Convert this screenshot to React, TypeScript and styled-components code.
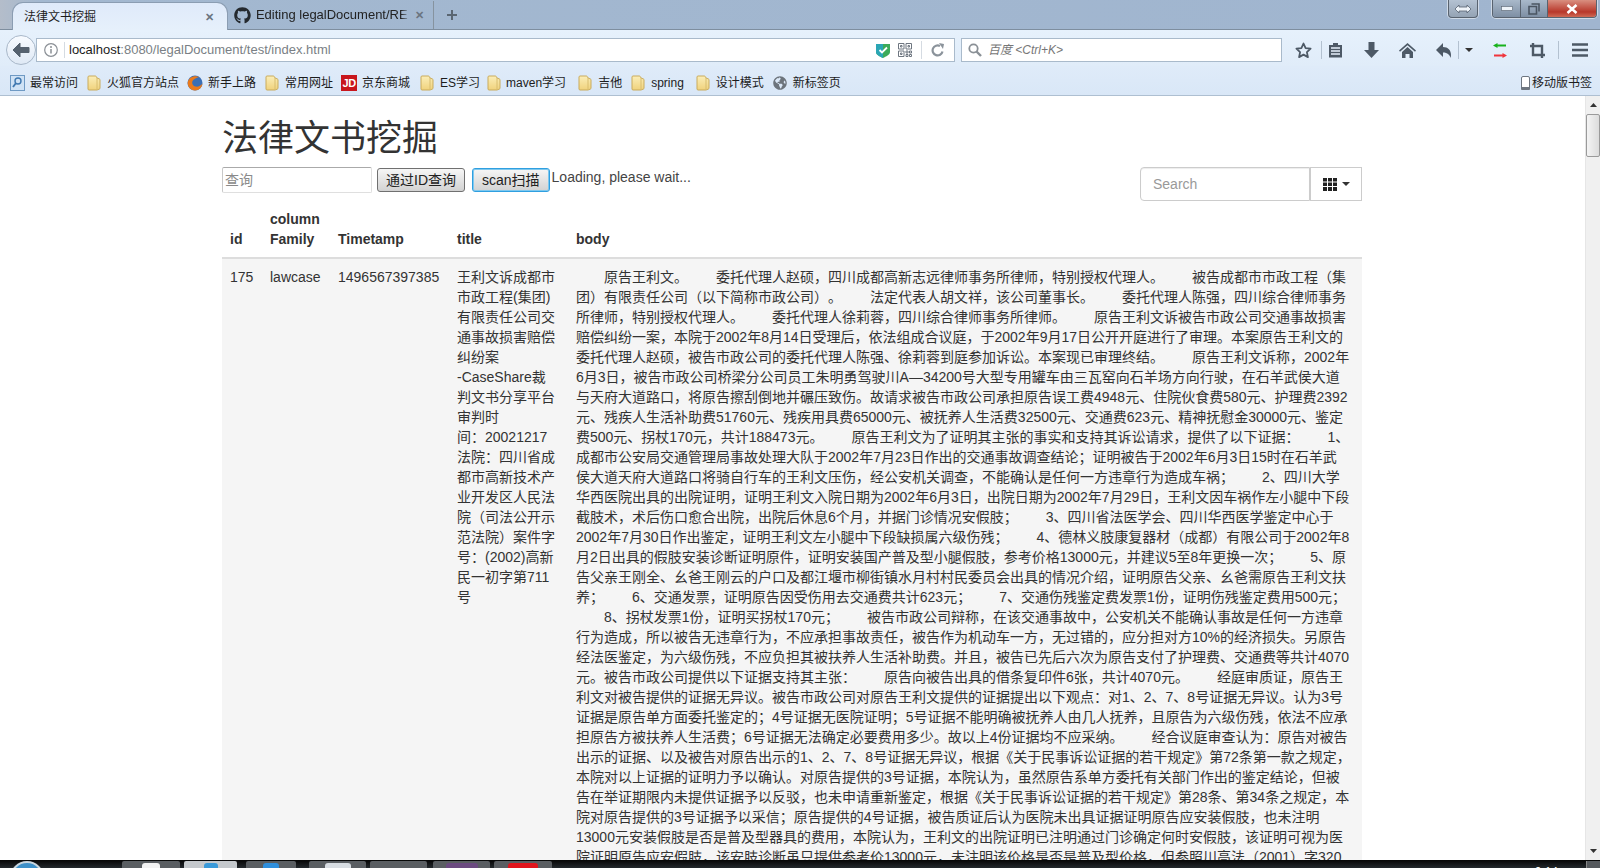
import React from 'react';
import styled, { createGlobalStyle } from 'styled-components';
import { FaGithub, FaGlobeAmericas } from 'react-icons/fa';

const bodyLines = [
  '　　原告王利文。　　委托代理人赵硕，四川成都高新志远律师事务所律师，特别授权代理人。　　被告成都市市政工程（集',
  '团）有限责任公司（以下简称市政公司）。　　法定代表人胡文祥，该公司董事长。　　委托代理人陈强，四川综合律师事务',
  '所律师，特别授权代理人。　　委托代理人徐莉蓉，四川综合律师事务所律师。　　原告王利文诉被告市政公司交通事故损害',
  '赔偿纠纷一案，本院于2002年8月14日受理后，依法组成合议庭，于2002年9月17日公开开庭进行了审理。本案原告王利文的',
  '委托代理人赵硕，被告市政公司的委托代理人陈强、徐莉蓉到庭参加诉讼。本案现已审理终结。　　原告王利文诉称，2002年',
  '6月3日，被告市政公司桥梁分公司员工朱明勇驾驶川A—34200号大型专用罐车由三瓦窑向石羊场方向行驶，在石羊武侯大道',
  '与天府大道路口，将原告擦刮倒地并碾压致伤。故请求被告市政公司承担原告误工费4948元、住院伙食费580元、护理费2392',
  '元、残疾人生活补助费51760元、残疾用具费65000元、被抚养人生活费32500元、交通费623元、精神抚慰金30000元、鉴定',
  '费500元、拐杖170元，共计188473元。　　原告王利文为了证明其主张的事实和支持其诉讼请求，提供了以下证据：　　1、',
  '成都市公安局交通管理局事故处理大队于2002年7月23日作出的交通事故调查结论；证明被告于2002年6月3日15时在石羊武',
  '侯大道天府大道路口将骑自行车的王利文压伤，经公安机关调查，不能确认是任何一方违章行为造成车祸；　　2、四川大学',
  '华西医院出具的出院证明，证明王利文入院日期为2002年6月3日，出院日期为2002年7月29日，王利文因车祸作左小腿中下段',
  '截肢术，术后伤口愈合出院，出院后休息6个月，并据门诊情况安假肢；　　3、四川省法医学会、四川华西医学鉴定中心于',
  '2002年7月30日作出鉴定，证明王利文左小腿中下段缺损属六级伤残；　　4、德林义肢康复器材（成都）有限公司于2002年8',
  '月2日出具的假肢安装诊断证明原件，证明安装国产普及型小腿假肢，参考价格13000元，并建议5至8年更换一次；　　5、原',
  '告父亲王刚全、幺爸王刚云的户口及都江堰市柳街镇水月村村民委员会出具的情况介绍，证明原告父亲、幺爸需原告王利文扶',
  '养；　　6、交通发票，证明原告因受伤用去交通费共计623元；　　7、交通伤残鉴定费发票1份，证明伤残鉴定费用500元；',
  '　　8、拐杖发票1份，证明买拐杖170元；　　被告市政公司辩称，在该交通事故中，公安机关不能确认事故是任何一方违章',
  '行为造成，所以被告无违章行为，不应承担事故责任，被告作为机动车一方，无过错的，应分担对方10%的经济损失。另原告',
  '经法医鉴定，为六级伤残，不应负担其被扶养人生活补助费。并且，被告已先后六次为原告支付了护理费、交通费等共计4070',
  '元。被告市政公司提供以下证据支持其主张：　　原告向被告出具的借条复印件6张，共计4070元。　　经庭审质证，原告王',
  '利文对被告提供的证据无异议。被告市政公司对原告王利文提供的证据提出以下观点：对1、2、7、8号证据无异议。认为3号',
  '证据是原告单方面委托鉴定的；4号证据无医院证明；5号证据不能明确被抚养人由几人抚养，且原告为六级伤残，依法不应承',
  '担原告方被扶养人生活费；6号证据无法确定必要费用多少。故以上4份证据均不应采纳。　　经合议庭审查认为：原告对被告',
  '出示的证据、以及被告对原告出示的1、2、7、8号证据无异议，根据《关于民事诉讼证据的若干规定》第72条第一款之规定，',
  '本院对以上证据的证明力予以确认。对原告提供的3号证据，本院认为，虽然原告系单方委托有关部门作出的鉴定结论，但被',
  '告在举证期限内未提供证据予以反驳，也未申请重新鉴定，根据《关于民事诉讼证据的若干规定》第28条、第34条之规定，本',
  '院对原告提供的3号证据予以采信；原告提供的4号证据，被告质证后认为医院未出具证据证明原告应安装假肢，也未注明',
  '13000元安装假肢是否是普及型器具的费用，本院认为，王利文的出院证明已注明通过门诊确定何时安假肢，该证明可视为医',
  '院证明原告应安假肢，该安肢诊断虽只提供参考价13000元，未注明该价格是否是普及型价格，但参照川高法（2001）字320',
];

const titleLines = [
  '王利文诉成都市',
  '市政工程(集团)',
  '有限责任公司交',
  '通事故损害赔偿',
  '纠纷案',
  '-CaseShare裁',
  '判文书分享平台',
  '审判时',
  '间：20021217',
  '法院：四川省成',
  '都市高新技术产',
  '业开发区人民法',
  '院（司法公开示',
  '范法院）案件字',
  '号：(2002)高新',
  '民一初字第711',
  '号',
];

const JdIcon = styled.span`
  width: 16px;
  height: 16px;
  display: flex;
  align-items: center;
  justify-content: center;
  background: #c8161d;
  color: #fff;
  font-size: 11px;
  font-weight: 700;
  letter-spacing: -0.5px;
`;

const Folder = () => (
  <svg width="14" height="16" viewBox="0 0 14 16">
    <defs>
      <linearGradient id="folderFill" x1="0" y1="0" x2="0" y2="1">
        <stop offset="0" stopColor="#fbeeb8" />
        <stop offset="1" stopColor="#f0d27c" />
      </linearGradient>
    </defs>
    <path d="M2 1h6c1 0 1.500.5 2 2l2.500 1c.5.2.5.5.5 1v8c0 .5 0 .8-.5 1L10 15H2c-.6 0-1-.4-1-1V2c0-.6.4-1 1-1z" fill="url(#folderFill)" stroke="#c9ab5c" />
    <path d="M10 3v12" stroke="#d8bd6e" />
  </svg>
);

const bookmarks: { icon: React.ReactNode; label: string; left: number; gap: number }[] = [
  {
    icon: (
      <svg width="15" height="16" viewBox="0 0 15 16">
        <rect x="0.5" y="0.5" width="14" height="15" fill="#cfe2f5" stroke="#6f9ac4" />
        <circle cx="8" cy="6" r="3" fill="none" stroke="#3f78b0" strokeWidth="1.4" />
        <path d="M6 8l-3 4" stroke="#3f78b0" strokeWidth="1.8" />
      </svg>
    ),
    label: '最常访问',
    left: 0,
    gap: 5,
  },
  { icon: <Folder />, label: '火狐官方站点', left: 9, gap: 6 },
  {
    icon: (
      <svg width="16" height="16" viewBox="0 0 16 16">
        <circle cx="8" cy="8" r="7.5" fill="#3a6fb5" />
        <path d="M12 2C7 0 1 3 .7 8c0 4 3.300 7.500 7.300 7.500 4 0 7-3 7.500-7-1.500 2.500-4.500 3.500-7 3-2.500-.5-4-3-3-5.500C6.500 4 9 3 12 2z" fill="#ea7a1c" />
      </svg>
    ),
    label: '新手上路',
    left: 8,
    gap: 5,
  },
  { icon: <Folder />, label: '常用网址', left: 9, gap: 6 },
  { icon: <JdIcon>JD</JdIcon>, label: '京东商城', left: 8, gap: 5 },
  { icon: <Folder />, label: 'ES学习', left: 10, gap: 6 },
  { icon: <Folder />, label: 'maven学习', left: 7, gap: 5 },
  { icon: <Folder />, label: '吉他', left: 12, gap: 6 },
  { icon: <Folder />, label: 'spring', left: 9, gap: 6 },
  { icon: <Folder />, label: '设计模式', left: 12, gap: 6 },
  { icon: <FaGlobeAmericas size={14} color="#6d747c" />, label: '新标签页', left: 9, gap: 6 },
];

const GlobalStyle = createGlobalStyle`
  html, body {
    margin: 0;
    height: 100%;
    overflow: hidden;
  }
  body {
    font-family: "Liberation Sans", "Noto Sans CJK SC", sans-serif;
    font-size: 14px;
    line-height: 20px;
    color: #333;
    text-spacing-trim: space-all;
  }
  * {
    box-sizing: border-box;
  }
`;

export default function App() {
  return (
    <Screen>
      <GlobalStyle />
      <TabBar>
        <ActiveTab>
          <TabTitle>法律文书挖掘</TabTitle>
          <TabClose>✕</TabClose>
        </ActiveTab>
        <InactiveTab>
          <FaGithub size={17} color="#24292e" />
          <FadedTitle>Editing legalDocument/RE</FadedTitle>
          <TabClose>✕</TabClose>
        </InactiveTab>
        <NewTab>
          <svg width="12" height="12" viewBox="0 0 12 12">
            <path d="M6 1v10M1 6h10" stroke="#5a6672" strokeWidth="2" />
          </svg>
        </NewTab>
        <WindowControls>
          <ExpandButton>
            <svg width="18" height="10" viewBox="0 0 18 10">
              <path d="M1 5l4-4v2h8V1l4 4-4 4V7H5v2z" fill="#eef3f8" stroke="#56616e" strokeWidth="0.8" />
            </svg>
          </ExpandButton>
          <CaptionGroup>
            <CaptionButton $width={28}>
              <svg width="12" height="6" viewBox="0 0 12 6">
                <rect x="0.5" y="0.5" width="11" height="4" fill="#eef3f8" stroke="#56616e" strokeWidth="0.6" />
              </svg>
            </CaptionButton>
            <CaptionButton $width={27}>
              <svg width="12" height="12" viewBox="0 0 12 12">
                <path d="M3.5 1h7.5v7.5M1 3.5h7.5V11H1z" fill="none" stroke="#4a5562" strokeWidth="1.6" />
              </svg>
            </CaptionButton>
            <CloseCaption>
              <svg width="12" height="10" viewBox="0 0 12 10">
                <path d="M1.5 1l9 8M10.5 1l-9 8" stroke="#fff" strokeWidth="2.6" />
              </svg>
            </CloseCaption>
          </CaptionGroup>
        </WindowControls>
      </TabBar>

      <NavBar>
        <BackButton>
          <svg width="18" height="16" viewBox="0 0 18 16">
            <path d="M8 1L1 8l7 7v-4.500h9v-5H8z" fill="#56626f" stroke="#56626f" strokeLinejoin="round" />
          </svg>
        </BackButton>
        <UrlBar>
          <InfoIcon>
            <svg width="14" height="14" viewBox="0 0 14 14">
              <circle cx="7" cy="7" r="6.3" fill="none" stroke="#8a8f95" strokeWidth="1.2" />
              <path d="M7 6v4.5" stroke="#8a8f95" strokeWidth="1.5" />
              <circle cx="7" cy="4" r="1" fill="#8a8f95" />
            </svg>
          </InfoIcon>
          <UrlDivider />
          <UrlText>
            localhost<UrlRest>:8080/legalDocument/test/index.html</UrlRest>
          </UrlText>
          <UrlIcons>
            <svg width="14" height="15" viewBox="0 0 14 15">
              <path d="M0 1h14v8c0 3-4 4.5-7 6-3-1.500-7-3-7-6z" fill="#3cab5a" />
              <path d="M0 1h7v14c-3-1.500-7-3-7-6z" fill="#2ba6b5" />
              <path d="M3.500 7l2.500 2.500L11 4.500" fill="none" stroke="#fff" strokeWidth="1.8" />
            </svg>
            <svg width="14" height="14" viewBox="0 0 14 14">
              <path
                d="M.5.5h5.500v5.500H.5zM8 .5h5.500v5.500H8zM.5 8H6v5.500H.5zM2.500 2.500H4V4H2.500zM10 2.500h1.500V4H10zM2.500 10H4v1.500H2.500zM8 8h2v2H8zM11.500 8h2v2h-2zM8 11.500h2v2H8zM11.500 11.500h2v2h-2z"
                fill="none"
                stroke="#6e7680"
                strokeWidth="1"
              />
            </svg>
            <UrlDividerTall />
            <svg width="14" height="14" viewBox="0 0 14 14">
              <path d="M11.500 8.500A5 5 0 1 1 9 3" fill="none" stroke="#8b939b" strokeWidth="2.2" />
              <path d="M8 0l5 1-1 5z" fill="#8b939b" />
            </svg>
          </UrlIcons>
        </UrlBar>
        <SearchBar>
          <svg width="14" height="14" viewBox="0 0 14 14">
            <circle cx="5.5" cy="5.5" r="4.2" fill="none" stroke="#8a9096" strokeWidth="1.8" />
            <path d="M8.500 8.500l4.500 4.500" stroke="#8a9096" strokeWidth="2.4" />
          </svg>
          <SearchHint>百度 &lt;Ctrl+K&gt;</SearchHint>
        </SearchBar>
        <NavIcons>
          <NavIcon $width={35}>
            <svg width="17" height="17" viewBox="0 0 17 17">
              <path d="M8.500 1.500l2.100 4.600 5 .6-3.700 3.400 1 5-4.400-2.500-4.400 2.500 1-5L1.400 6.700l5-.6z" fill="none" stroke="#4d5966" strokeWidth="1.8" strokeLinejoin="round" />
            </svg>
          </NavIcon>
          <NavSeparator />
          <NavIcon $width={26}>
            <svg width="15" height="16" viewBox="0 0 15 16">
              <path d="M1 3h4V1h5v2h4v12.500H1z" fill="#4d5966" />
              <path d="M3 6h9M3 9h9M3 12h9" stroke="#e6f0fb" strokeWidth="1.5" />
            </svg>
          </NavIcon>
          <NavIcon $width={30} $left={8}>
            <svg width="15" height="16" viewBox="0 0 15 16">
              <path d="M4.500 0h6v8H15l-7.500 8L0 8h4.500z" fill="#4d5966" />
            </svg>
          </NavIcon>
          <NavIcon $width={42}>
            <svg width="17" height="15" viewBox="0 0 17 15">
              <path d="M8.500 0L17 7.500l-1 1.200-7.500-6.500L1 8.700 0 7.500z" fill="#4d5966" />
              <path d="M3 9l5.500-5L14 9v6h-3.500v-4h-4v4H3z" fill="#4d5966" />
            </svg>
          </NavIcon>
          <NavIcon $width={30}>
            <svg width="15" height="15" viewBox="0 0 15 15">
              <path d="M7 0v4c5 0 8 3 8 8 0 1-.2 2-.5 3-.5-3-3-5.500-7.500-5.500V14L0 7z" fill="#4d5966" />
            </svg>
          </NavIcon>
          <NavSeparator />
          <NavIcon $width={20}>
            <Caret />
          </NavIcon>
          <NavIcon $width={42}>
            <svg width="14" height="15" viewBox="0 0 14 15">
              <path d="M0 2.500L4.500 0v1.500H13v2H4.500V5z" fill="#17b21c" />
              <path d="M14 12.500L9.500 15v-1.500H1v-2h8.500V10z" fill="#f0353c" />
            </svg>
          </NavIcon>
          <NavIcon $width={32}>
            <svg width="15" height="15" viewBox="0 0 15 15">
              <path d="M3 0v12h12M0 3h12v12" fill="none" stroke="#4d5966" strokeWidth="2.4" />
            </svg>
          </NavIcon>
          <NavSeparator $left={5} />
          <NavIcon $width={41}>
            <svg width="16" height="14" viewBox="0 0 16 14">
              <path d="M0 1.500h16M0 7h16M0 12.500h16" stroke="#4d5966" strokeWidth="2.4" />
            </svg>
          </NavIcon>
        </NavIcons>
      </NavBar>

      <BookmarkBar>
        {bookmarks.map((b) => (
          <Bookmark key={b.label} $left={b.left} $gap={b.gap}>
            {b.icon}
            <span>{b.label}</span>
          </Bookmark>
        ))}
        <MobileBookmarks>
          <svg width="9" height="14" viewBox="0 0 9 14">
            <rect x="0.5" y="0.5" width="8" height="13" rx="1.5" fill="#fff" stroke="#6d7680" />
            <rect x="0" y="11" width="9" height="3" rx="1" fill="#6d7680" />
          </svg>
          <span>移动版书签</span>
        </MobileBookmarks>
      </BookmarkBar>

      <Viewport>
        <Page>
          <Container>
            <Heading>法律文书挖掘</Heading>
            <ToolRow>
              <QueryGroup>
                <QueryInput placeholder="查询" />
                <NativeButton>通过ID查询</NativeButton>
                <NativeButton $focused>scan扫描</NativeButton>
                <LoadingText>Loading, please wait...</LoadingText>
              </QueryGroup>
              <TableTools>
                <TableSearch placeholder="Search" />
                <ColumnsButton>
                  <svg width="14" height="13" viewBox="0 0 14 13">
                    <path d="M0 0h4v3.500H0zM5 0h4v3.500H5zM10 0h4v3.500h-4zM0 4.500h4V8H0zM5 4.500h4V8H5zM10 4.500h4V8h-4zM0 9h4v4H0zM5 9h4v4H5zM10 9h4v4h-4z" fill="#222" />
                  </svg>
                  <Caret />
                </ColumnsButton>
              </TableTools>
            </ToolRow>
            <DataTable>
              <colgroup>
                <col width="40" />
                <col width="68" />
                <col width="119" />
                <col width="119" />
                <col />
              </colgroup>
              <thead>
                <tr>
                  <HeadCell>id</HeadCell>
                  <HeadCell>
                    column
                    <br />
                    Family
                  </HeadCell>
                  <HeadCell>Timetamp</HeadCell>
                  <HeadCell>title</HeadCell>
                  <HeadCell>body</HeadCell>
                </tr>
              </thead>
              <tbody>
                <StripedRow>
                  <BodyCell>175</BodyCell>
                  <BodyCell>lawcase</BodyCell>
                  <BodyCell>1496567397385</BodyCell>
                  <BodyCell>
                    {titleLines.map((line) => (
                      <TextLine key={line}>{line}</TextLine>
                    ))}
                  </BodyCell>
                  <BodyCell>
                    {bodyLines.map((line) => (
                      <TextLine key={line}>{line}</TextLine>
                    ))}
                  </BodyCell>
                </StripedRow>
              </tbody>
            </DataTable>
          </Container>
        </Page>
        <ScrollTrack>
          <ScrollArrow>
            <svg width="7" height="4" viewBox="0 0 7 4">
              <path d="M3.500 0L7 4H0z" fill="#333" />
            </svg>
          </ScrollArrow>
          <ScrollThumb />
          <ScrollArrow $bottom>
            <svg width="7" height="4" viewBox="0 0 7 4">
              <path d="M3.500 4L0 0h7z" fill="#333" />
            </svg>
          </ScrollArrow>
        </ScrollTrack>
      </Viewport>

      <Taskbar>
        <StartOrb />
        <TaskItem $left={122} $width={58} $mark="#f2f2f2" $markWidth={18} />
        <TaskItem $left={4} $width={53} $mark="#3a9ad9" $markWidth={14} $active />
        <TaskItem $left={9} $width={50} $mark="#2f8fdc" $markWidth={16} />
        <TaskItem $left={13} $width={57} $mark="#d8dde2" $markWidth={26} />
        <TaskItem $left={4} $width={57} />
        <TaskItem $left={6} $width={57} $mark="#6b4a80" $markWidth={32} />
        <TaskItem $left={4} $width={58} $mark="#e0141c" $markWidth={30} />
        <TrayClock>0:14</TrayClock>
        <ShowDesktop />
      </Taskbar>
    </Screen>
  );
}

const Screen = styled.div`
  width: 1600px;
  height: 868px;
  display: flex;
  flex-direction: column;
  overflow: hidden;
  background: #fff;
`;

const TabBar = styled.div`
  height: 30px;
  flex: none;
  display: flex;
  align-items: flex-end;
  padding-left: 12px;
  background: linear-gradient(to right, #b4bdca 0, #a3b8d0 40px, #a0b5cf 100%);
  border-bottom: 1px solid #7e8e9f;
`;

const ActiveTab = styled.div`
  width: 216px;
  height: 28px;
  margin-bottom: -1px;
  display: flex;
  align-items: center;
  justify-content: space-between;
  padding: 0 13px 0 11px;
  background: linear-gradient(to bottom, #dfeafa, #e6f0fb);
  border: 1px solid #8b9db2;
  border-bottom: none;
  border-radius: 11px 11px 0 0;
`;

const TabTitle = styled.span`
  font-size: 12px;
  color: #1c1c1c;
`;

const TabClose = styled.span`
  font-size: 11px;
  font-weight: 700;
  color: #6a7480;
`;

const InactiveTab = styled.div`
  width: 206px;
  height: 28px;
  display: flex;
  align-items: center;
  padding: 0 9px 0 6px;
  border-right: 1px solid #86939f;
  gap: 5px;
  ${TabClose} {
    margin-left: auto;
  }
`;

const FadedTitle = styled.span`
  width: 155px;
  font-size: 13px;
  color: #222;
  white-space: nowrap;
  overflow: hidden;
  mask-image: linear-gradient(to right, #000 145px, transparent);
`;

const NewTab = styled.div`
  width: 36px;
  height: 28px;
  display: flex;
  align-items: center;
  justify-content: center;
`;

const WindowControls = styled.div`
  margin-left: auto;
  align-self: flex-start;
  display: flex;
  padding-right: 3px;
  gap: 14px;
`;

const ExpandButton = styled.div`
  width: 30px;
  height: 18px;
  display: flex;
  align-items: center;
  justify-content: center;
  background: linear-gradient(to bottom, #b4c2d2, #94a3b4);
  border: 1px solid #59636f;
  border-top: none;
  border-radius: 0 0 4px 4px;
  box-shadow: 0 0 0 1px rgba(255, 255, 255, 0.5);
`;

const CaptionGroup = styled.div`
  display: flex;
  height: 18px;
  border: 1px solid #59636f;
  border-top: none;
  border-radius: 0 0 4px 4px;
  overflow: hidden;
  box-shadow: 0 0 0 1px rgba(255, 255, 255, 0.5);
`;

const CaptionButton = styled.div<{ $width: number }>`
  width: ${(p) => p.$width}px;
  display: flex;
  align-items: center;
  justify-content: center;
  background: linear-gradient(to bottom, #a9b9ca, #7e8fa4);
  border-right: 1px solid #59636f;
`;

const CloseCaption = styled.div`
  width: 48px;
  display: flex;
  align-items: center;
  justify-content: center;
  background: linear-gradient(to bottom, #d98f80, #b8372a 70%, #cf6a55);
`;

const NavBar = styled.div`
  height: 36px;
  flex: none;
  display: flex;
  align-items: center;
  padding: 4px 0 0 36px;
  background: linear-gradient(to bottom, #e6f1fc, #e0ecf9);
  position: relative;
`;

const BackButton = styled.div`
  position: absolute;
  left: 6px;
  top: 5px;
  width: 30px;
  height: 30px;
  border-radius: 50%;
  display: flex;
  align-items: center;
  justify-content: center;
  background: linear-gradient(to bottom, #f8fbff, #dfe9f5);
  border: 1px solid #a9b8c9;
  z-index: 1;
`;

const UrlBar = styled.div`
  width: 919px;
  height: 24px;
  display: flex;
  align-items: center;
  padding-left: 7px;
  background: #fff;
  border: 1px solid #a9bacb;
`;

const InfoIcon = styled.div`
  display: flex;
`;

const UrlDivider = styled.div`
  width: 1px;
  height: 16px;
  margin: 0 4px 0 6px;
  background: #d5dbe2;
`;

const UrlText = styled.span`
  font-size: 13px;
  color: #1c1c1c;
  white-space: nowrap;
`;

const UrlRest = styled.span`
  color: #7a7f85;
`;

const UrlIcons = styled.div`
  margin-left: auto;
  display: flex;
  align-items: center;
  padding-right: 9px;
  gap: 8px;
`;

const UrlDividerTall = styled.div`
  width: 1px;
  height: 18px;
  margin: 0 1px;
  background: #d5dbe2;
`;

const SearchBar = styled.div`
  width: 321px;
  height: 24px;
  margin-left: 6px;
  display: flex;
  align-items: center;
  gap: 6px;
  padding-left: 6px;
  background: #fff;
  border: 1px solid #a9bacb;
`;

const SearchHint = styled.span`
  font-size: 12px;
  font-style: italic;
  color: #777;
`;

const NavIcons = styled.div`
  display: flex;
  align-items: center;
  height: 100%;
  margin-left: 4px;
`;

const NavIcon = styled.div<{ $width: number; $left?: number }>`
  width: ${(p) => p.$width}px;
  margin-left: ${(p) => p.$left ?? 0}px;
  flex: none;
  display: flex;
  align-items: center;
  justify-content: center;
`;

const NavSeparator = styled.div<{ $left?: number }>`
  width: 1px;
  height: 18px;
  flex: none;
  margin-left: ${(p) => p.$left ?? 0}px;
  background: #b3c1d0;
`;

const Caret = styled.span`
  width: 0;
  height: 0;
  display: inline-block;
  border-top: 4px solid #333;
  border-left: 4px solid transparent;
  border-right: 4px solid transparent;
`;

const BookmarkBar = styled.div`
  height: 30px;
  flex: none;
  display: flex;
  align-items: center;
  padding: 4px 8px 0 10px;
  background: linear-gradient(to bottom, #dfebf9, #d9e7f7);
  border-bottom: 1px solid #aebfd1;
  font-size: 12px;
  color: #1c1c1c;
`;

const Bookmark = styled.div<{ $left: number; $gap: number }>`
  display: flex;
  align-items: center;
  margin-left: ${(p) => p.$left}px;
  gap: ${(p) => p.$gap}px;
  white-space: nowrap;
`;

const MobileBookmarks = styled.div`
  margin-left: auto;
  display: flex;
  align-items: center;
  gap: 2px;
  white-space: nowrap;
`;

const Viewport = styled.div`
  flex: 1;
  min-height: 0;
  display: flex;
  overflow: hidden;
`;

const Page = styled.div`
  flex: 1;
  min-width: 0;
  overflow: hidden;
  padding-right: 1px;
`;

const Container = styled.div`
  width: 1140px;
  margin: 0 auto;
`;

const Heading = styled.h1`
  height: 40px;
  margin: 20px 0 10px;
  font-size: 36px;
  font-weight: 400;
  line-height: 46px;
`;

const ToolRow = styled.div`
  height: 35px;
  padding-top: 1px;
  display: flex;
  justify-content: space-between;
  align-items: flex-start;
`;

const QueryGroup = styled.div`
  display: flex;
  align-items: flex-start;
`;

const QueryInput = styled.input`
  width: 150px;
  height: 26px;
  padding: 0 2px;
  font: inherit;
  border: 1px solid #dfdfdf;
  border-top-color: #aaa;
  border-left-color: #c8c8c8;
  border-radius: 2px;
  outline: none;
  &::placeholder {
    color: #8a8a8a;
  }
`;

const NativeButton = styled.button<{ $focused?: boolean }>`
  height: 24px;
  margin: 1px 0 0 5px;
  padding: 0 8px;
  font: inherit;
  color: #222;
  background: linear-gradient(to bottom, #f6f6f6, #d2d2d2);
  border: 1px solid ${(p) => (p.$focused ? '#2f9fe0' : '#707070')};
  border-radius: 3px;
  ${(p) => p.$focused && 'box-shadow: inset 0 0 0 1px #7fc8ee; margin-left: 7px; padding: 0 9px;'}
`;

const LoadingText = styled.span`
  margin-left: 2px;
  color: #444;
`;

const TableTools = styled.div`
  display: flex;
`;

const TableSearch = styled.input`
  width: 170px;
  height: 34px;
  padding: 6px 12px;
  font: inherit;
  border: 1px solid #ccc;
  border-radius: 4px 0 0 4px;
  box-shadow: inset 0 1px 1px rgba(0, 0, 0, 0.075);
  outline: none;
  &::placeholder {
    color: #999;
  }
`;

const ColumnsButton = styled.div`
  width: 52px;
  height: 34px;
  display: flex;
  align-items: center;
  justify-content: center;
  gap: 5px;
  border: 1px solid #ccc;
`;

const DataTable = styled.table`
  width: 1140px;
  table-layout: fixed;
  border-collapse: collapse;
`;

const HeadCell = styled.th`
  padding: 8px;
  text-align: left;
  vertical-align: bottom;
  border-bottom: 2px solid #ddd;
  font-weight: 700;
`;

const StripedRow = styled.tr`
  background: #f5f5f5;
`;

const BodyCell = styled.td`
  padding: 8px;
  vertical-align: top;
`;

const TextLine = styled.div`
  white-space: pre;
`;

const ScrollTrack = styled.div`
  width: 15px;
  flex: none;
  display: flex;
  flex-direction: column;
  background: #f0f0f0;
  border-left: 1px solid #e6e6e6;
`;

const ScrollArrow = styled.div<{ $bottom?: boolean }>`
  height: 18px;
  flex: none;
  display: flex;
  align-items: center;
  justify-content: center;
  ${(p) => p.$bottom && 'margin-top: auto;'}
`;

const ScrollThumb = styled.div`
  height: 43px;
  flex: none;
  background: linear-gradient(to right, #f4f4f4, #dcdcdc);
  border: 1px solid #9a9a9a;
  border-radius: 2px;
`;

const Taskbar = styled.div`
  height: 8px;
  flex: none;
  display: flex;
  align-items: flex-start;
  position: relative;
  overflow: hidden;
  padding-top: 1px;
  background: linear-gradient(to bottom, #050505, #23282c);
`;

const StartOrb = styled.div`
  position: absolute;
  left: 10px;
  top: 1px;
  width: 34px;
  height: 34px;
  border-radius: 50%;
  background: #3e90c8;
  border: 2px solid #c9d6df;
`;

const TaskItem = styled.div<{ $left: number; $width: number; $mark?: string; $markWidth?: number; $active?: boolean }>`
  width: ${(p) => p.$width}px;
  height: 7px;
  margin-left: ${(p) => p.$left}px;
  flex: none;
  display: flex;
  justify-content: center;
  padding-top: 2px;
  background: ${(p) => (p.$active ? '#c4c8cc' : '#5a5e62')};
  border-radius: 2px 2px 0 0;
  &::before {
    content: '';
    width: ${(p) => p.$markWidth ?? 0}px;
    background: ${(p) => p.$mark ?? 'transparent'};
    border-radius: 3px 3px 0 0;
  }
`;

const TrayClock = styled.span`
  margin-left: auto;
  margin-top: 4px;
  font-size: 12px;
  line-height: 14px;
  color: #fff;
`;

const ShowDesktop = styled.div`
  width: 14px;
  height: 7px;
  margin-left: 28px;
  background: #55595d;
  border-left: 1px solid #888;
`;
